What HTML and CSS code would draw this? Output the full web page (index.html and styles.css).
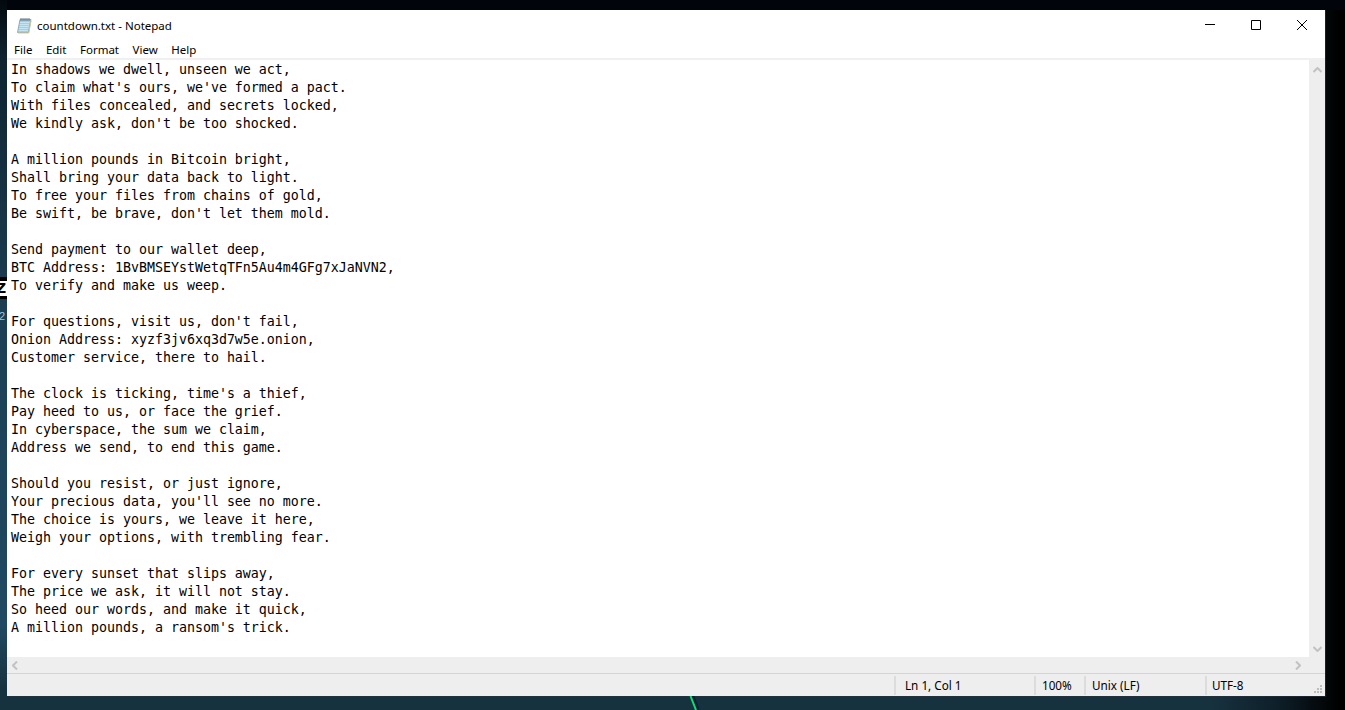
FILE: index.html
```html
<!DOCTYPE html>
<html lang="en">
<head>
<meta charset="utf-8">
<title>countdown.txt - Notepad</title>
<link rel="stylesheet" href="styles.css">
</head>
<body>
<div class="desktop">
  <div class="edge-top"></div>
  <div class="edge-left"></div>
  <div class="edge-box"><span>Z</span></div>
  <div class="edge-num">2</div>
  <svg class="green-line" width="14" height="14" viewBox="0 0 14 14"><path d="M4.500 0 10 14" stroke="#0a1f3a" stroke-width="3.500"/><path d="M2.500 0 8 14" stroke="#12dd72" stroke-width="2"/></svg>
  <main class="window">
    <header class="titlebar">
      <svg class="app-icon" width="16" height="17" viewBox="0 0 16 17">
        <path d="M4 2.500h11l-2.500 13H1.500z" fill="#9fd0e6"/>
        <path d="M3.500 5.500h10M3 7.500h10M2.700 9.500h10M2.300 11.500h10M2 13.500h10" stroke="#c4e4f2" stroke-width="1"/>
        <path d="M4 2.500h11l-2.500 13H1.500z" fill="none" stroke="#7f9aa8" stroke-width=".8"/>
        <path d="M2 16h10.800l2.200-12" fill="none" stroke="#d8c795" stroke-width="1"/>
        <path d="M5 1v3M7 1v3M9 1v3M11 1v3M13 1v3" stroke="#6b7680" stroke-width="1"/>
      </svg>
      <span class="title">countdown.txt - Notepad</span>
      <div class="controls">
        <button class="ctl" aria-label="Minimize"><svg width="10" height="10" viewBox="0 0 10 10"><path d="M0 4.500h10" stroke="#000" stroke-width="1"/></svg></button>
        <button class="ctl" aria-label="Maximize"><svg width="10" height="10" viewBox="0 0 10 10"><path d="M.5.500h9v9h-9z" fill="none" stroke="#000" stroke-width="1"/></svg></button>
        <button class="ctl" aria-label="Close"><svg width="10" height="10" viewBox="0 0 10 10"><path d="M0 0l10 10M10 0L0 10" stroke="#000" stroke-width="1"/></svg></button>
      </div>
    </header>
    <nav class="menubar">
      <span>File</span><span>Edit</span><span>Format</span><span>View</span><span>Help</span>
    </nav>
    <div class="editor">
      <pre class="text">In shadows we dwell, unseen we act,
To claim what's ours, we've formed a pact.
With files concealed, and secrets locked,
We kindly ask, don't be too shocked.

A million pounds in Bitcoin bright,
Shall bring your data back to light.
To free your files from chains of gold,
Be swift, be brave, don't let them mold.

Send payment to our wallet deep,
BTC Address: 1BvBMSEYstWetqTFn5Au4m4GFg7xJaNVN2,
To verify and make us weep.

For questions, visit us, don't fail,
Onion Address: xyzf3jv6xq3d7w5e.onion,
Customer service, there to hail.

The clock is ticking, time's a thief,
Pay heed to us, or face the grief.
In cyberspace, the sum we claim,
Address we send, to end this game.

Should you resist, or just ignore,
Your precious data, you'll see no more.
The choice is yours, we leave it here,
Weigh your options, with trembling fear.

For every sunset that slips away,
The price we ask, it will not stay.
So heed our words, and make it quick,
A million pounds, a ransom's trick.</pre>
      <div class="vscroll">
        <svg width="9" height="6" viewBox="0 0 9 6"><path d="M.5 5 4.500 1l4 4" fill="none" stroke="#c2c2c2" stroke-width="2"/></svg>
        <svg width="9" height="6" viewBox="0 0 9 6"><path d="M.5 1l4 4 4-4" fill="none" stroke="#c2c2c2" stroke-width="2"/></svg>
      </div>
    </div>
    <div class="hscroll">
      <svg width="6" height="9" viewBox="0 0 6 9"><path d="M5 .5 1 4.500l4 4" fill="none" stroke="#c2c2c2" stroke-width="2"/></svg>
      <svg width="6" height="9" viewBox="0 0 6 9"><path d="M1 .5l4 4-4 4" fill="none" stroke="#c2c2c2" stroke-width="2"/></svg>
    </div>
    <footer class="statusbar">
      <div class="cell cell-pos">Ln 1, Col 1</div>
      <div class="cell cell-zoom">100%</div>
      <div class="cell cell-eol">Unix (LF)</div>
      <div class="cell cell-enc">UTF-8</div>
      <svg class="grip" width="10" height="10" viewBox="0 0 10 10"><path d="M7 1h2v2H7zM4 4h2v2H4zM7 4h2v2H7zM1 7h2v2H1zM4 7h2v2H4zM7 7h2v2H7z" fill="#bdbdbd"/></svg>
    </footer>
  </main>
</div>
</body>
</html>
```

FILE: styles.css
```css
* { box-sizing: border-box; }
html, body { margin: 0; height: 100%; overflow: hidden; }
.desktop {
  position: relative;
  width: 1345px;
  height: 710px;
  padding: 10px 20px 14px 7px;
  background: linear-gradient(90deg, #17323f 0, #17323f 90%, #0e1f29 95%, #000 99.500%);
  overflow: hidden;
}
.edge-top {
  position: absolute;
  left: 0; top: 0; right: 0;
  height: 10px;
  background: #01040a;
}
.edge-left {
  position: absolute;
  left: 0; top: 0;
  width: 7px; height: 710px;
  background: linear-gradient(180deg, #03090e 0, #0e2431 8%, #1b3f54 45%, #1f4a62 88%, #17323f 97%);
}
.edge-box {
  position: absolute;
  left: 0; top: 277px;
  width: 7px; height: 22px;
  background: #fff;
  border-top: 4px solid #000;
  border-bottom: 3px solid #000;
  overflow: hidden;
  font: bold 14px/15px "DejaVu Sans", sans-serif;
  color: #000;
}
.edge-box span { display: block; margin-left: -4px; }
.edge-num {
  position: absolute;
  left: 0; top: 309px;
  font: 11px/14px "Liberation Sans", sans-serif;
  color: #9fc4da;
  margin-left: -1px;
}
.green-line { position: absolute; left: 688px; top: 696px; }
.window {
  display: flex;
  flex-direction: column;
  width: 1318px;
  height: 686px;
  background: #fff;
  box-shadow: 0 0 0 1px rgba(40,50,60,.6);
  font-family: "Noto Sans", "Open Sans", sans-serif;
  color: #000;
}
.titlebar {
  display: flex;
  align-items: center;
  height: 30px;
  padding-left: 9px;
  flex: none;
}
.app-icon { flex: none; margin-right: 5px; }
.title { font-size: 11.5px; color: #000; }
.controls { display: flex; margin-left: auto; height: 30px; }
.ctl {
  width: 46px;
  height: 30px;
  border: 0;
  padding: 0;
  background: none;
  display: flex;
  align-items: center;
  justify-content: center;
}
.menubar {
  display: flex;
  height: 20px;
  flex: none;
  padding-left: 7px;
  gap: 13.5px;
  font-size: 11.5px;
  line-height: 19px;
  border-bottom: 2px solid #f0f0f0;
}
.editor { flex: 1; display: flex; min-height: 0; }
.text {
  flex: 1;
  margin: 0;
  padding: 1px 0 0 4px;
  font: 13.3px/18px "DejaVu Sans Mono", "Liberation Mono", monospace;
  letter-spacing: -0.01px;
  color: #000;
  overflow: hidden;
}
.vscroll {
  flex: none;
  width: 16px;
  background: #eeeeee;
  display: flex;
  flex-direction: column;
  justify-content: space-between;
  align-items: center;
  padding: 7px 0 5px;
}
.hscroll {
  flex: none;
  height: 16px;
  background: #eeeeee;
  display: flex;
  align-items: center;
  justify-content: space-between;
  padding: 0 24px 0 5px;
}
.statusbar {
  flex: none;
  position: relative;
  display: flex;
  height: 23px;
  background: #eeeeee;
  border-top: 1px solid #d4d4d4;
  font-size: 11.7px;
  padding-top: 2px;
  padding-left: 887px;
  color: #000;
}
.cell { border-left: 2px solid #dcdcdc; height: 19px; line-height: 18px; padding-left: 9px; }
.cell-pos { width: 140px; }
.cell-zoom { width: 50px; padding-left: 6px; }
.cell-eol { width: 121px; padding-left: 6px; }
.cell-enc { flex: 1; padding-left: 5px; }
.grip { position: absolute; right: 2px; bottom: 2px; }
```
